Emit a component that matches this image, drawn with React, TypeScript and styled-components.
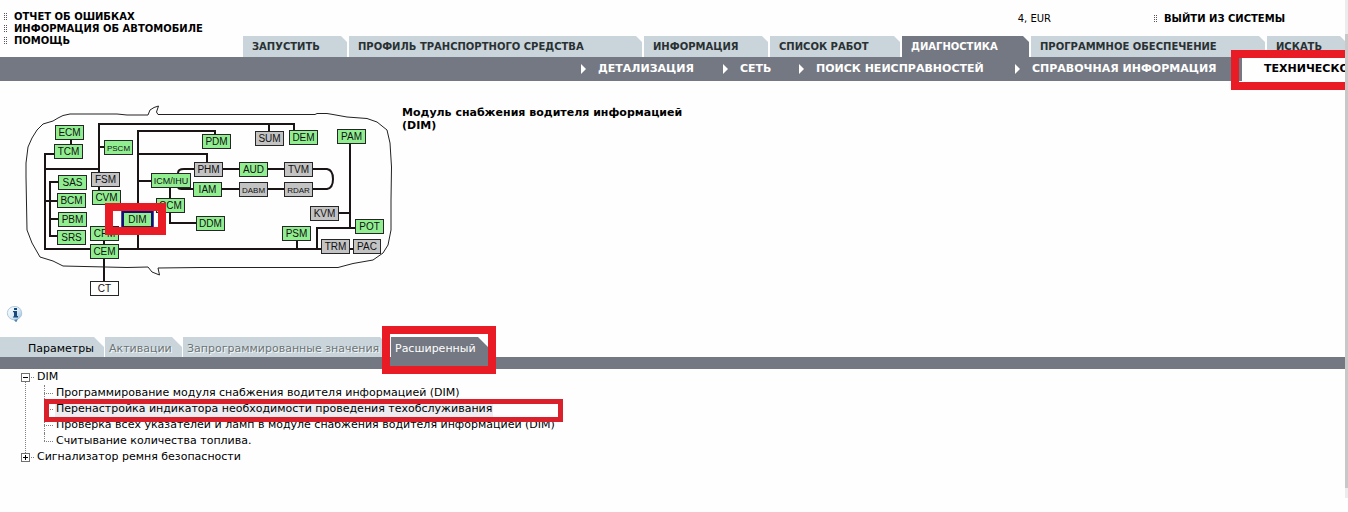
import React from "react";
import styled, { createGlobalStyle, css } from "styled-components";

const GlobalStyle = createGlobalStyle`
  * { box-sizing: border-box; }
  body {
    margin: 0;
    background: #fefefe;
    color: #000;
    font: 11px/16px Verdana, "DejaVu Sans", sans-serif;
    overflow: hidden;
  }
  button { font: inherit; border: 0; padding: 0; cursor: pointer; text-align: left; white-space: nowrap; }
  a { color: inherit; text-decoration: none; }
  ul { list-style: none; margin: 0; padding: 0; }
`;

const slate = "#747882";
const mist = "#c9d5db";

const Page = styled.div`
  position: relative;
  min-height: 100vh;
  overflow: hidden;
`;

const ScrollEdge = styled.div`
  position: absolute;
  z-index: 4;
  top: 0;
  right: 0;
  bottom: 14px;
  width: 3px;
  background: #c8c8c8;
  border: solid #ececec;
  border-width: 34px 0 10px;
`;

const Marker = styled.div<{ $thin?: boolean }>`
  position: absolute;
  z-index: 3;
  pointer-events: none;
  border: ${(p) => (p.$thin ? "5px solid #d9202b" : "8px solid #e91c25")};
`;

const Header = styled.header`
  display: grid;
  grid-template-columns: 243px 1fr;
  height: 57px;
`;

const QuickLinks = styled.ul`
  padding: 11px 0 0 4px;
`;

const QuickLink = styled.a`
  display: flex;
  align-items: center;
  gap: 6px;
  font-weight: bold;
  font-size: 10px;
  line-height: 12px;
  white-space: nowrap;
`;

const HeaderMain = styled.div`
  display: flex;
  flex-direction: column;
  justify-content: space-between;
  min-width: 0;
`;

const Utility = styled.div`
  display: flex;
  justify-content: flex-end;
  gap: 103px;
  padding: 13px 63px 0 0;
  font-size: 10px;
  line-height: 12px;
`;

const MainTabs = styled.nav`
  display: flex;
  gap: 2px;
`;

const MainTab = styled.button<{ $w: number; $active?: boolean }>`
  flex: none;
  width: ${(p) => p.$w}px;
  height: 21px;
  padding-left: 9px;
  font-size: 10px;
  font-weight: bold;
  color: ${(p) => (p.$active ? "#fff" : "#2a3133")};
  background: ${(p) => (p.$active ? slate : mist)};
  clip-path: polygon(0 0, calc(100% - 6px) 0, 100% 6px, 100% 100%, 0 100%);
`;

const SubNav = styled.nav`
  position: relative;
  display: flex;
  height: 24px;
  padding-left: 580px;
  background: ${slate};
`;

const SubItem = styled.button<{ $w: number; $active?: boolean }>`
  display: flex;
  flex: none;
  align-items: center;
  gap: 12px;
  width: ${(p) => p.$w}px;
  font-size: 11px;
  font-weight: bold;
  color: #fff;
  background: none;
  ${(p) =>
    p.$active &&
    css`
      color: #000;
      background: #fefefe;
      padding-left: 22px;
    `}
`;

const SubMarker = styled(Marker)`
  top: -7px;
  left: 1231px;
  right: -8px;
  height: 40px;
`;

const Overview = styled.section`
  display: flex;
  padding-top: 15px;
`;

const Network = styled.svg`
  flex: none;
  display: block;
`;

const ModuleTitle = styled.h1`
  margin: 10px 0 0 2px;
  width: 300px;
  font-size: 11px;
  line-height: 13px;
`;

const InfoButton = styled.button`
  display: block;
  margin: 5px 0 0 6px;
  background: none;
`;

const Tabs = styled.div`
  position: relative;
  display: flex;
  gap: 1px;
  margin-top: 9px;
  border-bottom: 12px solid ${slate};
`;

const Tab = styled.button<{ $w: number; $state?: "active" | "disabled"; $indent?: number }>`
  flex: none;
  width: ${(p) => p.$w}px;
  height: 20px;
  padding: 3px 0 0 ${(p) => p.$indent ?? 4}px;
  line-height: 16px;
  color: ${(p) => (p.$state === "active" ? "#fff" : p.$state === "disabled" ? "#6c7476" : "#000")};
  text-shadow: ${(p) => (p.$state === "disabled" ? "1px 1px 0 #f2f6f8" : "none")};
  background: ${(p) => (p.$state === "active" ? slate : mist)};
  clip-path: polygon(0 0, calc(100% - 10px) 0, 100% 10px, 100% 100%, 0 100%);
`;

const TabMarker = styled(Marker)`
  top: -11px;
  left: 382px;
  width: 114px;
  height: 48px;
`;

const TreePanel = styled.div`
  position: relative;
`;

const Tree = styled.ul`
  padding-left: 21px;
  white-space: nowrap;
`;

const TreeNode = styled.li`
  position: relative;
  &:not(:last-child)::before {
    content: "";
    position: absolute;
    top: 13px;
    bottom: -4px;
    left: 4px;
    border-left: 1px dotted #808080;
  }
`;

const NodeRow = styled.div`
  display: flex;
  align-items: center;
  height: 16px;
`;

const Toggle = styled.button`
  display: block;
  background: none;
  margin-right: 3px;
  line-height: 0;
`;

const Leaves = styled.ul`
  margin-left: 23px;
`;

const Leaf = styled.li<{ $selected?: boolean }>`
  display: flex;
  align-items: center;
  height: 16px;
  position: relative;
  &::before {
    content: "";
    width: 9px;
    margin-right: 2px;
    border-top: 1px dotted #808080;
  }
  &::after {
    content: "";
    position: absolute;
    left: 0;
    top: 0;
    height: 16px;
    border-left: 1px dotted #808080;
  }
  &:last-child::after { height: 8px; }
  a {
    padding: 0 1px;
    background: ${(p) => (p.$selected ? "#ececf1" : "none")};
  }
`;

const RowMarker = styled(Marker)`
  top: 30px;
  left: 44px;
  width: 519px;
  height: 23px;
`;

const Grip = () => (
  <svg width="4" height="8" viewBox="0 0 4 8" fill="#555" aria-hidden="true">
    <path d="M0 0h1v1H0zM2 0h1v1H2zM0 2h1v1H0zM2 2h1v1H2zM0 4h1v1H0zM2 4h1v1H2zM0 6h1v1H0zM2 6h1v1H2z" />
  </svg>
);

const Arrow = () => (
  <svg width="6" height="10" viewBox="0 0 6 10" fill="#fff" aria-hidden="true">
    <path d="M1 0L6 5L1 10z" />
  </svg>
);

const InfoIcon = () => (
  <svg width="18" height="18" viewBox="0 0 18 18" aria-hidden="true">
    <defs>
      <linearGradient id="bubble" x1="0" y1="0" x2="1" y2="1">
        <stop offset="0" stopColor="#fff" />
        <stop offset="0.5" stopColor="#dcecf7" />
        <stop offset="1" stopColor="#86b4da" />
      </linearGradient>
    </defs>
    <path
      d="M9 1.500a7 6.600 0 0 1 3 12.400L10.800 14.500 10 17 7.800 14.800A7 6.600 0 0 1 9 1.500z"
      fill="url(#bubble)"
      stroke="#a3bdd0"
      strokeWidth="0.8"
    />
    <path d="M12 14.200L10.200 17 8 14.800z" fill="#4f86b5" />
    <path d="M8 3h3v2H8zM7 6h4v5h1v1.500H7V11.500h1V7.300H7z" fill="#174a7c" />
  </svg>
);

const ToggleIcon = ({ open }: { open?: boolean }) => (
  <svg width="13" height="9" viewBox="0 0 13 9" shapeRendering="crispEdges" aria-hidden="true">
    <rect x="0.500" y="0.500" width="8" height="8" fill="#fff" stroke="#707070" />
    <path d={open ? "M2 4.500H7" : "M2 4.500H7M4.500 2V7"} stroke="#000" />
    <path d="M10 4.500h1M12 4.500h1" stroke="#808080" />
  </svg>
);

type Unit = [name: string, x: number, y: number, kind?: "off" | "blank", w?: number, size?: number];

const units: Unit[] = [
  ["ECM", 55, 125],
  ["TCM", 54, 144],
  ["PSCM", 104, 140, undefined, 28, 8],
  ["FSM", 91, 172, "off"],
  ["CVM", 92, 190],
  ["SAS", 58, 175],
  ["BCM", 57, 193],
  ["PBM", 58, 212],
  ["SRS", 57, 230],
  ["CFM", 90, 226],
  ["CEM", 90, 244],
  ["CT", 90, 281, "blank"],
  ["PDM", 202, 134],
  ["SUM", 255, 131, "off"],
  ["DEM", 289, 130],
  ["PAM", 337, 129],
  ["PHM", 194, 162, "off"],
  ["AUD", 239, 162],
  ["TVM", 284, 162, "off"],
  ["ICM/IHU", 151, 173, undefined, 39, 9],
  ["IAM", 193, 182],
  ["DABM", 239, 182, "off", 28, 8],
  ["RDAR", 284, 182, "off", 28, 8],
  ["CCM", 156, 198],
  ["DIM", 123, 212],
  ["DDM", 196, 216],
  ["KVM", 310, 206, "off"],
  ["POT", 355, 219],
  ["PSM", 282, 226],
  ["TRM", 321, 239, "off"],
  ["PAC", 353, 239, "off", 27],
];

const fills = { on: "#90ee90", off: "#c3c3c3", blank: "#fff" };

const wires =
  "M71 139V145M54 154H45V249H321M45 169H99M99 173V124H294V131M269 124V131M99 147H104M99 186V191" +
  "M58 182H50V236H57M45 201H57M50 219H58M104 240V245M104 258V281M138 249V131H215V134M138 154H207V162" +
  "M138 181H151M178 173Q178 169 184 169H194M178 188Q179 189 184 189H193M170 187V223H196" +
  "M222 169H239M267 169H284M221 189H239M267 189H284M312 169H327Q333 170 333 179T327 189H312" +
  "M350 143V228M338 213H350M355 228H317V249M297 240V249M349 249H353";

const carOutline =
  "M26 177L26 163L28 147L32 138L37 130L43 124L53 121L58 118L63 115.500L70 114H117L127 115H148" +
  "L150 110L154 107.500L158.500 106L156.500 112L158 114.500H315L317 113.500H327L333 114.500L347 117" +
  "L367 118.500L377 122L387 130L390 143L391.500 167L391 200V230L388 245L383 253L373 260L353 263.500" +
  "L338 267.500H200L158 268L159.500 275L152 272L148 267L127 267.500L63 266L53 261L40 257L32 243L27 230L26 177z";

const NetworkDiagram = () => (
  <Network width="400" height="204" viewBox="0 96 400 204" role="img" aria-label="DIM">
    <path d={carOutline} fill="none" stroke="#222" strokeWidth="1" />
    <path d={wires} fill="none" stroke="#1a1414" strokeWidth="2" />
    {units.map(([name, x, y, kind, w = 28, size = 10]) => (
      <g key={name}>
        <rect x={x + 0.5} y={y + 0.5} width={w} height={14} fill={fills[kind ?? "on"]} stroke="#262626" />
        <text
          x={x + w / 2 + 0.5}
          y={y + 11}
          fontSize={size}
          fontFamily="Arial, 'Liberation Sans', sans-serif"
          textAnchor="middle"
          fill="#111"
        >
          {name}
        </text>
      </g>
    ))}
    <path d="M122.500 227V211.500H152.500V227" fill="none" stroke="#10107c" strokeWidth="2.500" />
    <rect x="109" y="207" width="53" height="24" fill="none" stroke="#e91c25" strokeWidth="8" />
  </Network>
);

export default function App() {
  return (
    <Page>
      <GlobalStyle />
      <Header>
        <QuickLinks>
          {["ОТЧЕТ ОБ ОШИБКАХ", "ИНФОРМАЦИЯ ОБ АВТОМОБИЛЕ", "ПОМОЩЬ"].map((label) => (
            <li key={label}>
              <QuickLink href="#">
                <Grip />
                {label}
              </QuickLink>
            </li>
          ))}
        </QuickLinks>
        <HeaderMain>
          <Utility>
            <span>4, EUR</span>
            <QuickLink href="#">
              <Grip />
              ВЫЙТИ ИЗ СИСТЕМЫ
            </QuickLink>
          </Utility>
          <MainTabs>
            <MainTab $w={104}>ЗАПУСТИТЬ</MainTab>
            <MainTab $w={293}>ПРОФИЛЬ ТРАНСПОРТНОГО СРЕДСТВА</MainTab>
            <MainTab $w={124}>ИНФОРМАЦИЯ</MainTab>
            <MainTab $w={130}>СПИСОК РАБОТ</MainTab>
            <MainTab $w={127} $active>ДИАГНОСТИКА</MainTab>
            <MainTab $w={234}>ПРОГРАММНОЕ ОБЕСПЕЧЕНИЕ</MainTab>
            <MainTab $w={79}>ИСКАТЬ</MainTab>
          </MainTabs>
        </HeaderMain>
      </Header>
      <SubNav>
        <SubItem $w={142}><Arrow />ДЕТАЛИЗАЦИЯ</SubItem>
        <SubItem $w={76}><Arrow />СЕТЬ</SubItem>
        <SubItem $w={216}><Arrow />ПОИСК НЕИСПРАВНОСТЕЙ</SubItem>
        <SubItem $w={228}><Arrow />СПРАВОЧНАЯ ИНФОРМАЦИЯ</SubItem>
        <SubItem $w={120} $active>ТЕХНИЧЕСКО</SubItem>
        <SubMarker />
      </SubNav>

      <Overview>
        <NetworkDiagram />
        <ModuleTitle>Модуль снабжения водителя информацией (DIM)</ModuleTitle>
      </Overview>
      <InfoButton aria-label="Информация">
        <InfoIcon />
      </InfoButton>

      <Tabs>
        <Tab $w={104} $indent={28}>Параметры</Tab>
        <Tab $w={77} $state="disabled">Активации</Tab>
        <Tab $w={207} $state="disabled">Запрограммированные значения</Tab>
        <Tab $w={97} $state="active">Расширенный</Tab>
        <TabMarker />
      </Tabs>

      <TreePanel>
        <Tree>
          <TreeNode>
            <NodeRow>
              <Toggle aria-label="DIM"><ToggleIcon open /></Toggle>
              <a href="#">DIM</a>
            </NodeRow>
            <Leaves>
              <Leaf><a href="#">Программирование модуля снабжения водителя информацией (DIM)</a></Leaf>
              <Leaf $selected><a href="#">Перенастройка индикатора необходимости проведения техобслуживания</a></Leaf>
              <Leaf><a href="#">Проверка всех указателей и ламп в модуле снабжения водителя информацией (DIM)</a></Leaf>
              <Leaf><a href="#">Считывание количества топлива.</a></Leaf>
            </Leaves>
          </TreeNode>
          <TreeNode>
            <NodeRow>
              <Toggle aria-label="Сигнализатор ремня безопасности"><ToggleIcon /></Toggle>
              <a href="#">Сигнализатор ремня безопасности</a>
            </NodeRow>
          </TreeNode>
        </Tree>
        <RowMarker $thin />
      </TreePanel>
      <ScrollEdge />
    </Page>
  );
}
